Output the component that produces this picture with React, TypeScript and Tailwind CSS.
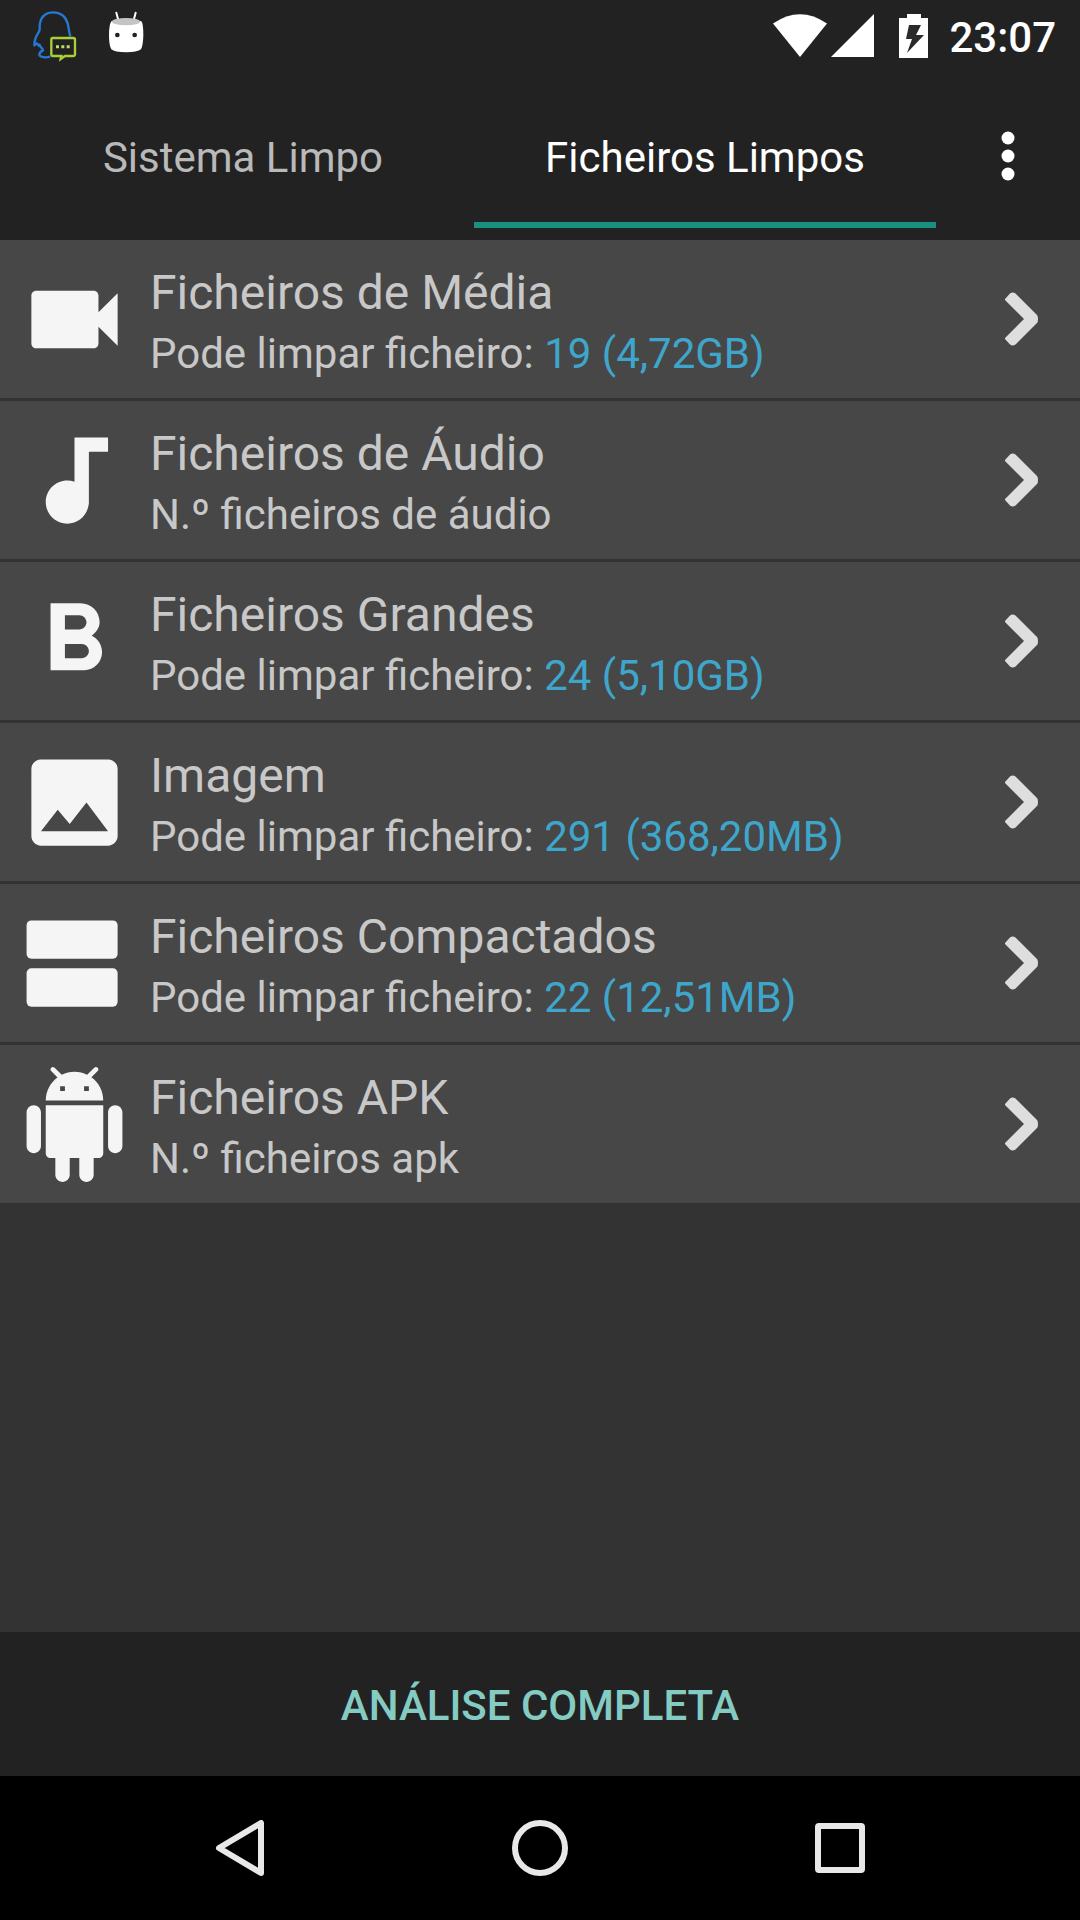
import type { ReactNode } from 'react'
import { MdAudiotrack, MdFormatBold, MdImage, MdVideocam } from 'react-icons/md'

const iconClass = 'size-[115px] shrink-0 text-[#f5f5f5]'

const AgendaIcon = () => (
  <svg viewBox="0 0 24 24" fill="currentColor" className={iconClass} aria-hidden="true">
    <rect x="2" y="3" width="19" height="8" rx="1" />
    <rect x="2" y="13" width="19" height="8" rx="1" />
  </svg>
)

const AndroidIcon = () => (
  <svg viewBox="0 0 24 24" fill="currentColor" className={iconClass} aria-hidden="true">
    <path d="M6 18c0 .55.45 1 1 1h1v3.5c0 .83.67 1.5 1.5 1.5s1.5-.67 1.5-1.5V19h2v3.5c0 .83.67 1.5 1.5 1.5s1.5-.67 1.5-1.5V19h1c.55 0 1-.45 1-1V8H6v10zM3.5 8C2.67 8 2 8.67 2 9.5v7c0 .83.67 1.5 1.5 1.5S5 17.33 5 16.5v-7C5 8.67 4.33 8 3.5 8zm17 0c-.83 0-1.5.67-1.5 1.5v7c0 .83.67 1.5 1.5 1.5s1.5-.67 1.5-1.5v-7c0-.83-.67-1.5-1.5-1.5zm-4.97-5.84l1.3-1.3c.2-.2.2-.51 0-.71-.2-.2-.51-.2-.71 0l-1.48 1.48C13.85 1.23 12.95 1 12 1c-.96 0-1.86.23-2.66.63L7.85.15c-.2-.2-.51-.2-.71 0-.2.2-.2.51 0 .71l1.31 1.31C6.97 3.26 6 5.01 6 7h12c0-1.99-.97-3.75-2.47-4.84zM10 5H9V4h1v1zm5 0h-1V4h1v1z" />
  </svg>
)

const Chevron = () => (
  <svg viewBox="0 0 33 54" className="h-[54px] w-[33px] shrink-0 fill-[#dedede]" aria-hidden="true">
    <path d="M0 7 5 1.500Q7.500-.5 10.500 1.500L32 23Q33 24 33 27T32 31L10.500 52.500Q7.500 54.500 5 52.500L0 47V46L19 27 0 8Z" />
  </svg>
)

type FileGroup = {
  title: string
  text: string
  value?: string
  icon: ReactNode
}

const groups: FileGroup[] = [
  {
    title: 'Ficheiros de Média',
    text: 'Pode limpar ficheiro:',
    value: '19 (4,72GB)',
    icon: <MdVideocam className={iconClass} />
  },
  {
    title: 'Ficheiros de Áudio',
    text: 'N.º ficheiros de áudio',
    icon: <MdAudiotrack className={iconClass} />
  },
  {
    title: 'Ficheiros Grandes',
    text: 'Pode limpar ficheiro:',
    value: '24 (5,10GB)',
    icon: <MdFormatBold className={iconClass} />
  },
  {
    title: 'Imagem',
    text: 'Pode limpar ficheiro:',
    value: '291 (368,20MB)',
    icon: <MdImage className={iconClass} />
  },
  {
    title: 'Ficheiros Compactados',
    text: 'Pode limpar ficheiro:',
    value: '22 (12,51MB)',
    icon: <AgendaIcon />
  },
  {
    title: 'Ficheiros APK',
    text: 'N.º ficheiros apk',
    icon: <AndroidIcon />
  }
]

function StatusBar() {
  return (
    <div className="flex h-[72px] items-center justify-between bg-[#222222] pr-6 pl-8">
      <div className="flex items-center gap-[30px]">
        {/* Messenger notification */}
        <svg viewBox="96 33 138 156" className="h-[52px] w-[46px]" fill="none" aria-hidden="true">
          <path
            d="M211 112C206 98 207 88 203 73C196 51 181 40 160 40C138 40 124 53 120 72C117 84 122 87 117 98C109 110 103 121 103 139L111 133L116 140L119 137C119 145 129 148 129 154C124 156 118 162 118 168C120 175 139 177 151 173"
            stroke="#2579d4"
            strokeWidth="7"
            strokeLinejoin="round"
          />
          <path
            d="M158 117H220Q225 117 225 122V166Q225 171 220 171H195L182 180L184 171H158Q154 171 154 166V122Q154 117 158 117Z"
            stroke="#a9d136"
            strokeWidth="7"
          />
          <path d="M168 139h9v9h-9zM184 139h9v9h-9zM200 139h9v9h-9z" fill="#c3dc62" />
        </svg>
        {/* Marshmallow robot */}
        <svg viewBox="324 33 108 156" className="h-[52px] w-9" aria-hidden="true">
          <path d="M349 41L355 64M407 41L401 64" stroke="#fff" strokeWidth="6" strokeLinecap="round" />
          <path d="M334 67Q378 54 424 67Q430 71 430 110Q429 140 423 151Q412 160 378 160T334 151Q327 138 327 110Q327 78 334 67Z" fill="#fff" />
          <ellipse cx="378" cy="68" rx="42" ry="11" fill="#c4c4c4" />
          <circle cx="352" cy="108" r="7" fill="#222" />
          <circle cx="404" cy="108" r="7" fill="#222" />
        </svg>
      </div>
      <div className="flex items-center">
        <svg viewBox="0 0 54 44" className="h-11 w-[54px] fill-white" aria-hidden="true">
          <path d="M0 9.500Q27-9 54 9.500L27 43Z" />
        </svg>
        <svg viewBox="0 0 44 44" className="ml-1 size-11 fill-white" aria-hidden="true">
          <path d="M43 0V43H0Z" />
        </svg>
        <svg viewBox="0 0 30 44" className="ml-6 h-11 w-[30px]" aria-hidden="true">
          <path d="M8 0H22V4H29V44H0V4H8Z" fill="#fff" />
          <path d="M10 11H22L17 21H25L8 39L13 25H7Z" fill="#2a2a2a" />
        </svg>
        <span className="ml-5 pt-1 text-[42px] leading-[48px] font-medium text-white">23:07</span>
      </div>
    </div>
  )
}

function Tabs() {
  return (
    <header className="flex h-[168px] bg-[#222222] pb-3 pl-3">
      <nav role="tablist" className="flex flex-1">
        <button
          role="tab"
          aria-selected="false"
          className="flex-1 border-b-[6px] border-transparent pt-[22px] text-[42px] leading-[48px] text-[#b9b9b9]"
        >
          Sistema Limpo
        </button>
        <button
          role="tab"
          aria-selected="true"
          className="flex-1 border-b-[6px] border-[#1a9080] pt-[22px] text-[42px] leading-[48px] text-white"
        >
          Ficheiros Limpos
        </button>
      </nav>
      <button aria-label="Mais opções" className="flex w-36 items-center justify-center pt-3">
        <svg viewBox="0 0 14 50" className="h-[50px] w-3.5 fill-white" aria-hidden="true">
          <circle cx="7" cy="7" r="6.500" />
          <circle cx="7" cy="25" r="6.500" />
          <circle cx="7" cy="43" r="6.500" />
        </svg>
      </button>
    </header>
  )
}

function NavigationBar() {
  return (
    <nav className="flex h-36 bg-black px-[90px]">
      <button aria-label="Voltar" className="flex flex-1 items-center justify-center">
        <svg viewBox="0 0 56 56" className="size-14" fill="none" stroke="#e8e8e8" strokeWidth="6" strokeLinejoin="round" aria-hidden="true">
          <path d="M49 3V53L7 28Z" />
        </svg>
      </button>
      <button aria-label="Início" className="flex flex-1 items-center justify-center">
        <svg viewBox="0 0 56 56" className="size-14" fill="none" stroke="#e8e8e8" strokeWidth="6" aria-hidden="true">
          <circle cx="28" cy="28" r="25" />
        </svg>
      </button>
      <button aria-label="Recentes" className="flex flex-1 items-center justify-center">
        <svg viewBox="0 0 56 56" className="size-14" fill="none" stroke="#e8e8e8" strokeWidth="6" aria-hidden="true">
          <rect x="6" y="6" width="44" height="44" rx="1" />
        </svg>
      </button>
    </nav>
  )
}

export default function App() {
  return (
    <div className="flex min-h-screen flex-col bg-[#333333] font-[Roboto,sans-serif]">
      <StatusBar />
      <Tabs />

      <main className="flex-1">
        <ul className="flex flex-col gap-[3px]">
          {groups.map((group) => (
            <li key={group.title}>
              <button className="flex w-full items-center bg-[#474747] py-[17px] pr-[42px] pl-[17px] text-left">
                {group.icon}
                <span className="ml-[18px] flex-1 pt-0.5 text-[#c8c8c8]">
                  <span className="block text-[48px] leading-[68px]">{group.title}</span>
                  <span className="block text-[42px] leading-[54px]">
                    {group.text}
                    {group.value && <span className="text-[#3fa6cb]"> {group.value}</span>}
                  </span>
                </span>
                <Chevron />
              </button>
            </li>
          ))}
        </ul>
      </main>

      <button className="h-36 bg-[#222222] pt-1 text-[42px] leading-[48px] font-medium text-[#84cbc3] uppercase">
        Análise completa
      </button>
      <NavigationBar />
    </div>
  )
}
